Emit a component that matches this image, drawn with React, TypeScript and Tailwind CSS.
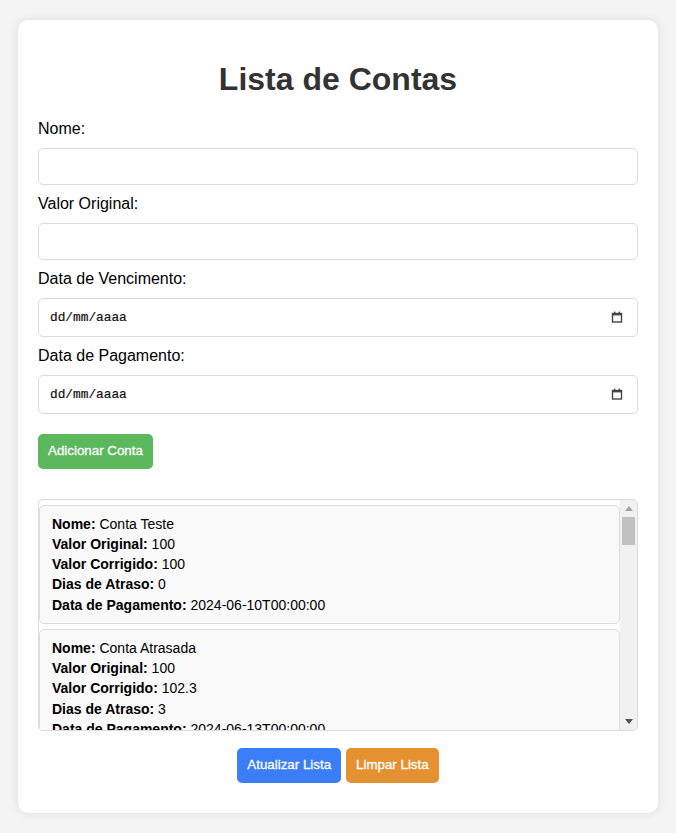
import React from 'react';

// ---------------------------------------------------------------------------
// Data
// ---------------------------------------------------------------------------

interface Conta {
  nome: string;
  valorOriginal: number;
  valorCorrigido: number;
  diasAtraso: number;
  dataPagamento: string;
}

const contas: Conta[] = [
  { nome: 'Conta Teste', valorOriginal: 100, valorCorrigido: 100, diasAtraso: 0, dataPagamento: '2024-06-10T00:00:00' },
  { nome: 'Conta Atrasada', valorOriginal: 100, valorCorrigido: 102.3, diasAtraso: 3, dataPagamento: '2024-06-13T00:00:00' },
  { nome: 'Conta Luz', valorOriginal: 150, valorCorrigido: 150, diasAtraso: 0, dataPagamento: '2024-06-05T00:00:00' },
  { nome: 'Conta Agua', valorOriginal: 80, valorCorrigido: 82.4, diasAtraso: 4, dataPagamento: '2024-06-14T00:00:00' },
  { nome: 'Internet', valorOriginal: 120, valorCorrigido: 120, diasAtraso: 0, dataPagamento: '2024-06-08T00:00:00' },
  { nome: 'Aluguel', valorOriginal: 1200, valorCorrigido: 1245, diasAtraso: 6, dataPagamento: '2024-06-16T00:00:00' },
  { nome: 'Telefone', valorOriginal: 60, valorCorrigido: 60, diasAtraso: 0, dataPagamento: '2024-06-09T00:00:00' },
  { nome: 'Cartao', valorOriginal: 500, valorCorrigido: 511, diasAtraso: 2, dataPagamento: '2024-06-12T00:00:00' },
  { nome: 'Condominio', valorOriginal: 300, valorCorrigido: 300, diasAtraso: 0, dataPagamento: '2024-06-10T00:00:00' },
  { nome: 'Gas', valorOriginal: 90, valorCorrigido: 91.5, diasAtraso: 1, dataPagamento: '2024-06-11T00:00:00' },
  { nome: 'Seguro', valorOriginal: 200, valorCorrigido: 200, diasAtraso: 0, dataPagamento: '2024-06-07T00:00:00' },
  { nome: 'Escola', valorOriginal: 700, valorCorrigido: 721, diasAtraso: 5, dataPagamento: '2024-06-15T00:00:00' },
  { nome: 'Academia', valorOriginal: 110, valorCorrigido: 110, diasAtraso: 0, dataPagamento: '2024-06-10T00:00:00' },
];

// ---------------------------------------------------------------------------
// Form pieces
// ---------------------------------------------------------------------------

function Label({ children }: { children: React.ReactNode }) {
  return <label className="block mb-[10px] text-[16px] leading-[18px] text-black">{children}</label>;
}

function TextField() {
  return (
    <input
      type="text"
      className="block w-full h-[37px] mb-[10px] px-[10px] border border-[#dddddd] rounded-[5px] bg-white text-[13.33px] outline-none"
    />
  );
}

function CalendarIcon() {
  return (
    <svg width="12" height="12" viewBox="0 0 12 12" className="shrink-0">
      <rect x="1.5" y="2.5" width="9" height="8.5" fill="none" stroke="#444" strokeWidth="1.4" />
      <rect x="1" y="2" width="10" height="2.4" fill="#444" />
      <rect x="3" y="0.6" width="1.4" height="2" fill="#444" />
      <rect x="7.6" y="0.6" width="1.4" height="2" fill="#444" />
    </svg>
  );
}

// date field drawn by hand so the pt-BR placeholder stays fixed
function DateField() {
  return (
    <div className="flex items-center justify-between w-full h-[39px] mb-[10px] pl-[11px] pr-[14px] border border-[#dddddd] rounded-[5px] bg-white">
      <span className="font-['Liberation_Mono','DejaVu_Sans_Mono',monospace] text-[12.8px] text-[#111] [-webkit-text-stroke:0.2px_#111]">
        dd/mm/aaaa
      </span>
      <CalendarIcon />
    </div>
  );
}

const btn = 'h-[35px] px-[10px] rounded-[5px] text-white text-[13.33px] [-webkit-text-stroke:0.3px_white]';

// classic scrollbar look (the browser hides the real one)
function FakeScrollbar() {
  return (
    <div className="w-[17px] shrink-0 flex flex-col bg-[#f1f1f1]">
      <div className="h-[17px] flex items-center justify-center">
        <svg width="8" height="5" viewBox="0 0 8 5">
          <path d="M4 0 L8 5 L0 5 Z" fill="#a3a3a3" />
        </svg>
      </div>
      <div className="flex-1 px-[2px]">
        <div className="h-[28px] bg-[#c1c1c1]" />
      </div>
      <div className="h-[17px] flex items-center justify-center">
        <svg width="8" height="5" viewBox="0 0 8 5">
          <path d="M0 0 L8 0 L4 5 Z" fill="#505050" />
        </svg>
      </div>
    </div>
  );
}

// ---------------------------------------------------------------------------
// List item
// ---------------------------------------------------------------------------

function ContaItem({ conta }: { conta: Conta }) {
  const rows: [string, string | number][] = [
    ['Nome', conta.nome],
    ['Valor Original', conta.valorOriginal],
    ['Valor Corrigido', conta.valorCorrigido],
    ['Dias de Atraso', conta.diasAtraso],
    ['Data de Pagamento', conta.dataPagamento],
  ];

  return (
    <li className="shrink-0 px-[12px] py-[8px] bg-[#f9f9f9] border border-[#dddddd] rounded-[5px] text-[14px] leading-[20.25px] text-black">
      {rows.map(([k, v]) => (
        <div key={k}>
          <strong className="font-bold">{k}:</strong> {v}
        </div>
      ))}
    </li>
  );
}

// ---------------------------------------------------------------------------
// App
// ---------------------------------------------------------------------------

export default function App() {
  return (
    <div className="min-h-screen bg-[#f4f4f4] px-[18px] pt-[20px] pb-[21px] font-['Liberation_Sans',Arial,sans-serif]">
      <div className="bg-white rounded-[10px] shadow-[0_0_10px_rgba(0,0,0,0.1)] p-[20px]">
        <h1 className="my-[21.44px] text-center text-[32px] leading-[36.8px] font-bold text-[#333333]">
          Lista de Contas
        </h1>

        <Label>Nome:</Label>
        <TextField />
        <Label>Valor Original:</Label>
        <TextField />
        <Label>Data de Vencimento:</Label>
        <DateField />
        <Label>Data de Pagamento:</Label>
        <DateField />

        <button className={`mt-[10px] bg-[#5cb85c] ${btn}`}>Adicionar Conta</button>

        <div className="mt-[30px] h-[232px] flex border border-[#dddddd] rounded-[5px] overflow-hidden">
          <ul className="flex-1 min-w-0 overflow-y-auto flex flex-col gap-[5px] py-[5px]">
            {contas.map((c, i) => (
              <ContaItem key={i} conta={c} />
            ))}
          </ul>
          <FakeScrollbar />
        </div>

        <div className="flex justify-center gap-[5px] mt-[17px] mb-[10px]">
          <button className={`bg-[#3b7ef8] ${btn}`}>Atualizar Lista</button>
          <button className={`bg-[#e49132] ${btn}`}>Limpar Lista</button>
        </div>
      </div>
    </div>
  );
}
